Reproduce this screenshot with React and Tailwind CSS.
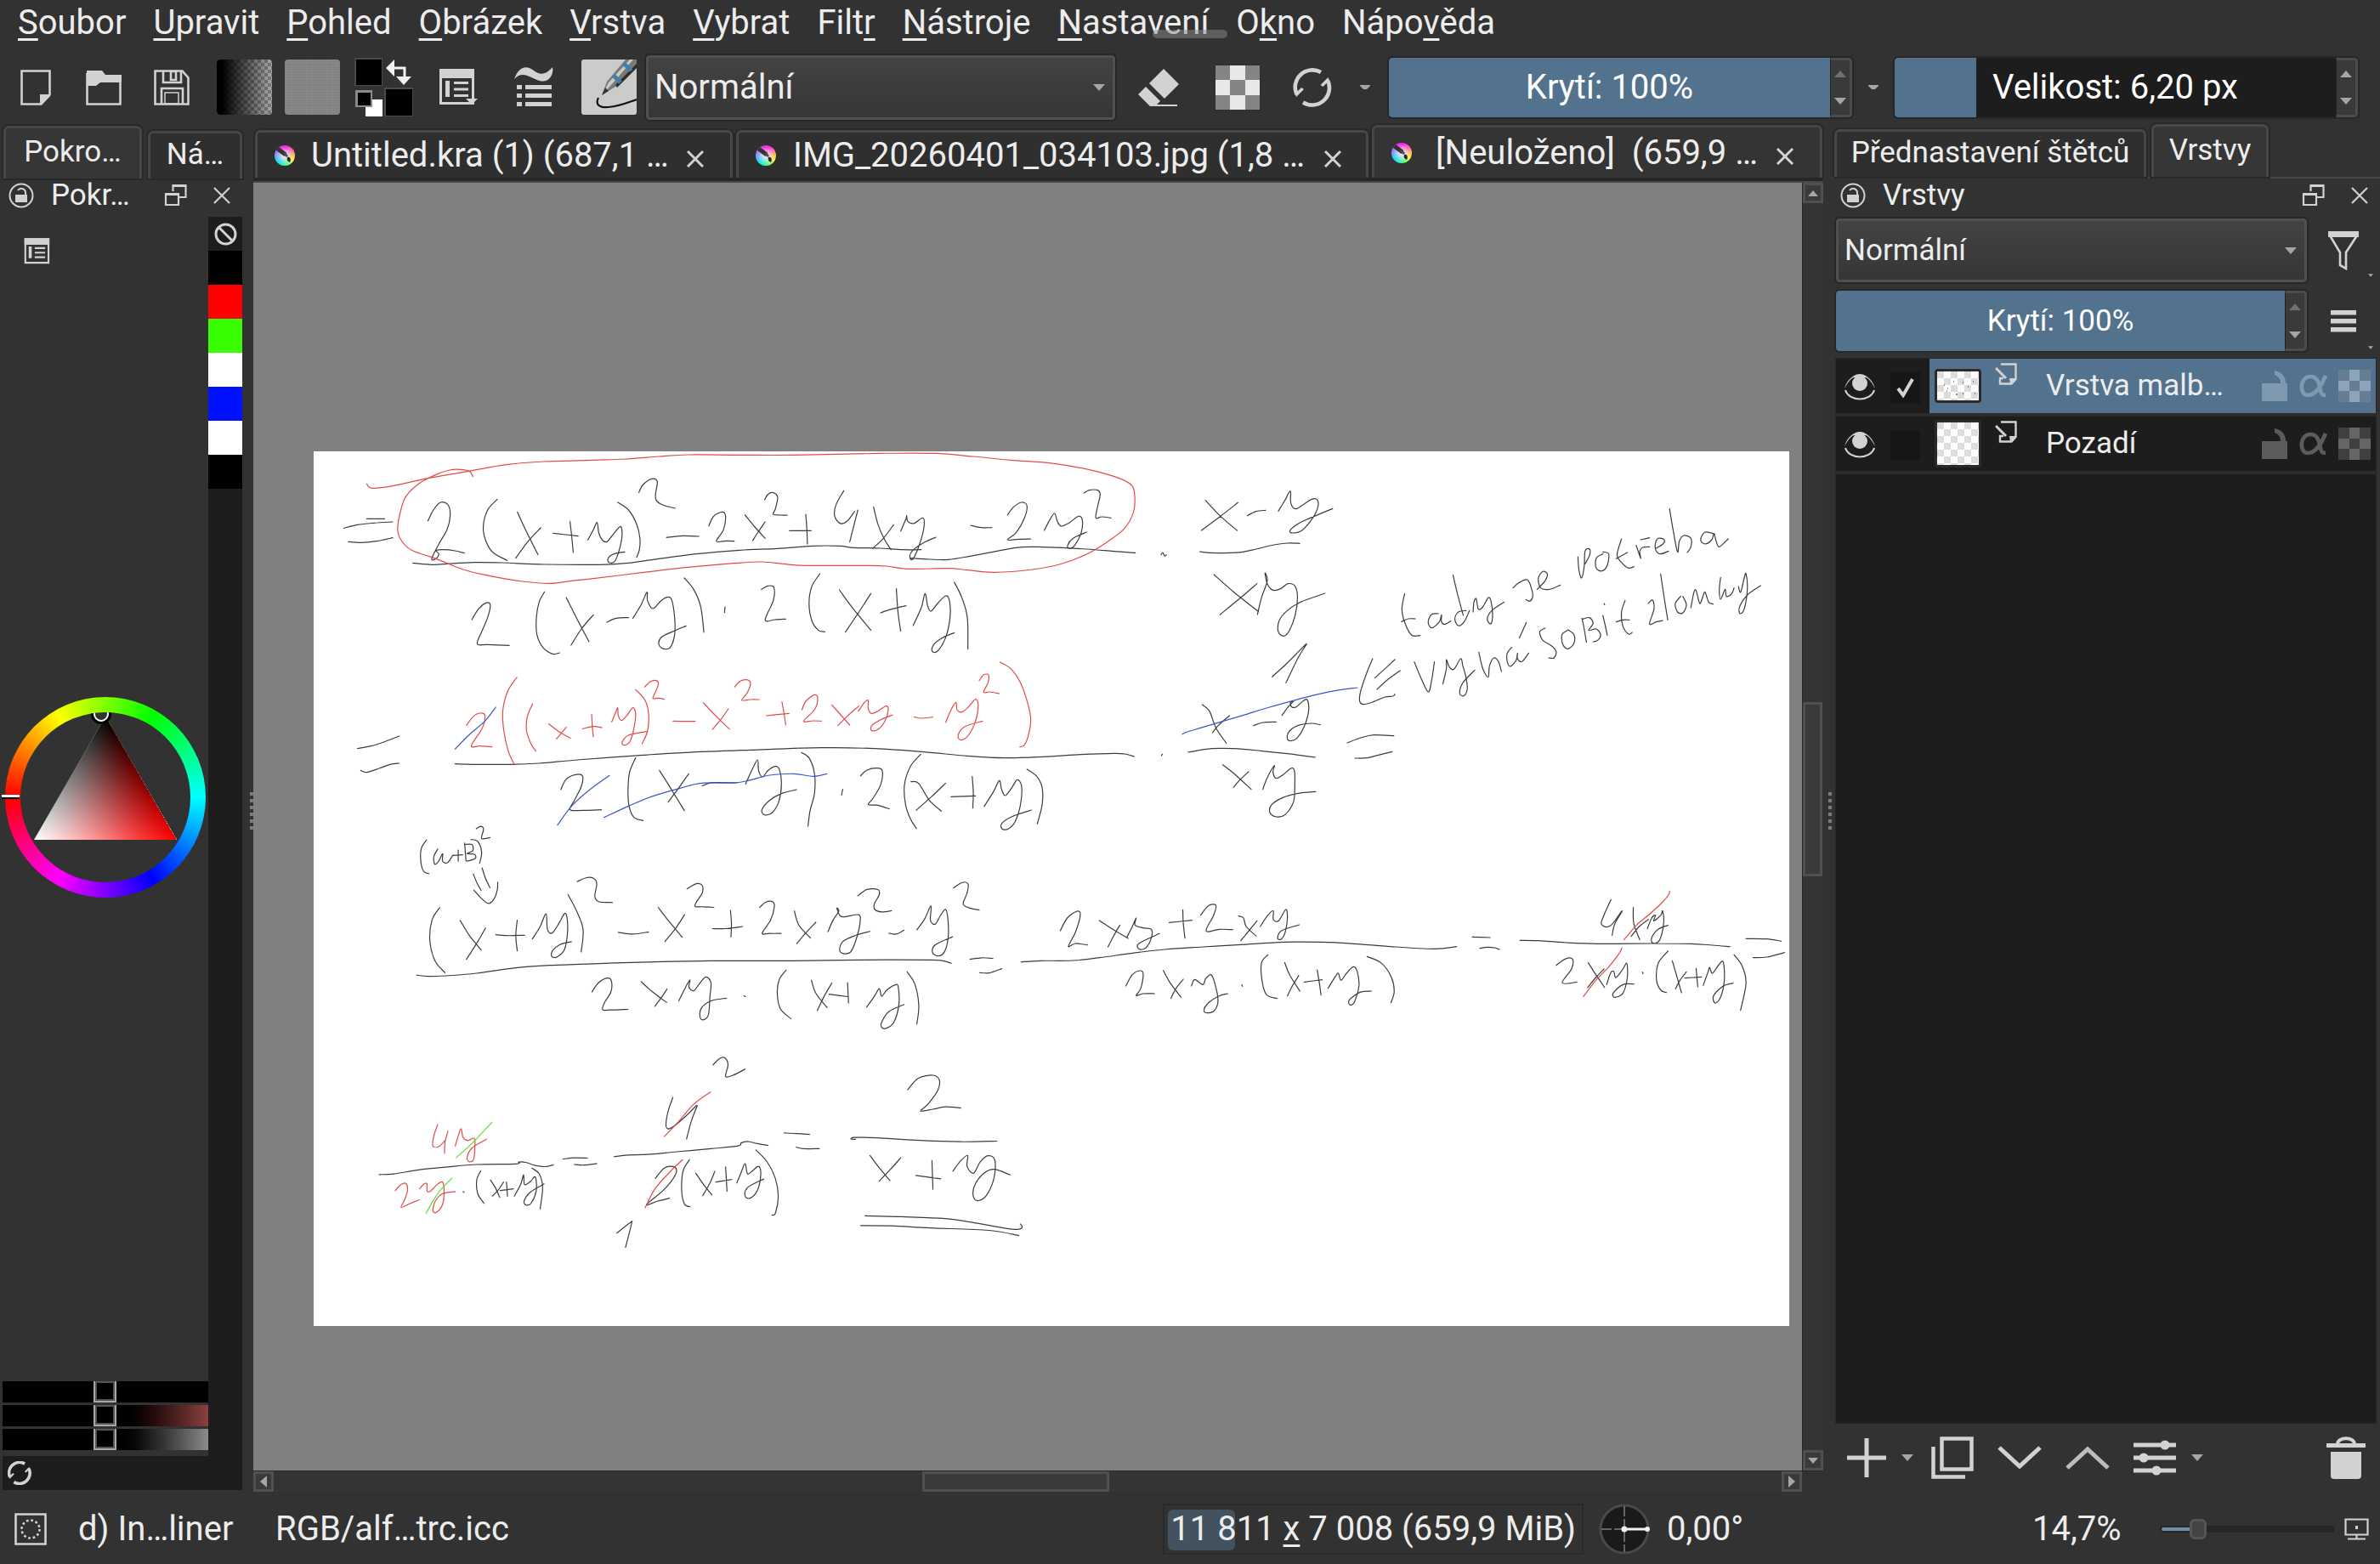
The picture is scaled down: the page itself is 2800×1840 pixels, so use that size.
import React from "react";

/* ---------- handwriting on the sheet ---------- */

const BLACK = "#3c3c3c";
const RED = "#e04a48";
const BLUE = "#3b55c9";
const GREEN = "#5fdc3c";

const SHEET = [
  {
    x: -9, y: -11, w: 1000 / 1568, h: 1 / 3,
    pens: [
      [BLACK, `112,271 145,271|70,304 95,292 125,286 160,282|78,352 100,355 130,350 160,338
|225,278 235,240 248,213 262,222 266,260 260,310 245,360 232,412 240,412 245,395 240,383 255,380 275,384 292,392
|353,202 335,240 327,300 332,350 345,390 371,418|390,247 405,310 428,398|433,303 410,350 387,410
|456,322 502,332|487,281 490,330 493,390
|520,346 530,310 537,284 540,320 546,345 555,352 565,330 580,298 583,330 578,380 570,420 560,426 557,412 568,395 588,388
|575,213 595,240 610,290 616,340 615,380 610,407|614,178 622,150 638,130 648,140 645,180 646,205 658,222 681,234
|665,337 695,331 725,333|743,296 752,262 768,247 774,262 770,310 757,350 775,349 790,350
|810,258 828,300 847,340|847,282 835,315 824,348|846,204 852,185 862,179 870,195 866,235 862,255 875,258 888,258
|892,313 932,313|922,255 924,310 925,360|992,172 978,220 975,260 985,287 998,280 1012,245|1018,240 1010,300 1003,353
|1047,229 1055,290 1066,340 1079,380|1084,292 1065,340 1045,376
|1097,315 1107,270 1108,260 1110,280 1122,287 1138,268 1140,300 1132,360 1120,412 1114,408 1118,385 1140,355 1162,336
|1226,294 1245,302 1265,302|1294,258 1305,230 1320,213 1330,225 1325,270 1310,320 1294,345 1315,343 1337,342
|1362,312 1372,275 1381,252 1386,280 1393,297 1408,285 1425,262 1432,275 1430,320 1418,365 1408,376 1405,365 1415,340 1440,318
|1435,180 1445,170 1460,170 1465,185 1460,230 1457,268 1468,264 1485,268
|197,427 235,433 260,430 310,425 360,426 440,432 540,433 590,428 640,415 720,395 800,382 870,376 935,367 985,367 1010,373 1060,375 1100,380 1135,380
|1115,410 1150,414 1185,415 1225,403 1275,385 1320,371 1360,371 1440,378 1490,386 1530,391
|306,627 318,590 332,568 340,575 335,620 324,670 316,713 335,715 375,718
|440,529 430,565 425,620 426,680 437,725 455,748 468,744|480,549 500,625 522,705|530,610 508,660 489,717|555,636 572,622 595,620
|603,622 618,575 629,530 630,560 640,588 655,560 668,547 675,560 680,620 680,680 672,725 660,730 651,715 655,690 675,670 701,649
|698,480 715,520 728,580 734,672|773,582 772,602|840,520 852,508 863,513 862,560 847,628 865,627 885,625
|948,465 933,510 928,570 933,630 945,664 957,670|984,522 1010,590 1042,664|1042,535 1020,600 995,671
|1060,603 1080,590 1107,578|1089,518 1092,600 1097,667
|1120,648 1135,585 1142,535 1147,580 1153,597 1165,570 1180,543 1187,560 1188,620 1180,690 1165,738 1155,738 1158,715 1175,690 1196,673
|1196,495 1210,550 1220,620 1221,731
|95,1082 130,1068 172,1038|101,1159 112,1166 135,1152 155,1138 172,1134
|275,1136 310,1138 380,1138 430,1134 500,1122 600,1108 700,1096 820,1087 950,1079 1050,1082 1140,1094 1220,1108 1290,1115 1360,1111 1430,1103 1490,1099 1510,1101 1528,1110
|470,1227 480,1190 497,1174 510,1178 508,1215 495,1265 487,1298 510,1300 545,1298
|608,1115 597,1165 594,1230 596,1285 605,1325 622,1336|652,1159 672,1220 698,1301|706,1171 688,1220 668,1271|731,1214 750,1202 795,1203
|811,1207 822,1160 833,1122 835,1160 842,1182 852,1160 865,1145 873,1155 877,1210 872,1270 860,1308 846,1316 841,1298 855,1265 878,1240 905,1227
|914,1096 928,1115 938,1170 938,1240 930,1300 926,1356|990,1226 988,1246
|1023,1178 1035,1158 1053,1151 1063,1160 1060,1210 1045,1260 1037,1280 1055,1282 1076,1295
|1134,1102 1115,1145 1104,1210 1106,1280 1115,1330 1126,1364|1116,1199 1130,1205 1150,1265 1172,1303|1180,1204 1155,1250 1126,1299
|1190,1252 1235,1249|1229,1180 1231,1240 1230,1292
|1251,1286 1268,1235 1279,1195 1283,1225 1290,1248 1302,1220 1312,1192 1320,1215 1318,1280 1308,1340 1295,1366 1284,1365 1284,1345 1305,1320 1338,1299
|1330,1155 1348,1180 1358,1220 1358,1280 1349,1348`],
      [RED, `112,148 122,163 160,155 225,128 300,103 370,80 440,69 530,64 590,60 650,51 705,45 800,46 900,46 1060,40 1160,40 1230,51 1300,64 1380,76 1450,100 1500,128 1524,155 1529,200 1526,250 1510,305 1480,350 1440,396 1390,432 1340,450 1270,460 1220,452 1185,446 1110,448 1070,438 1030,436 920,436 880,430 840,423 790,428 700,443 620,461 530,482 490,490 450,499 400,492 340,473 290,450 240,412 195,382 175,345 169,305 175,240 185,190 210,145 240,115 265,99 285,97 302,104 308,122
|296,1000 308,970 320,957 330,965 325,1010 305,1072 320,1073 343,1076|389,831 372,880 363,950 365,1020 373,1090 384,1137
|418,924 408,970 407,1020 415,1065 424,1091|448,995 465,1020 488,1046|480,1007 470,1030 462,1048
|510,1012 530,1004 546,1008|527,961 528,1000 530,1040
|564,988 572,950 575,938 576,965 582,983 592,965 603,938 608,960 605,1010 598,1055 588,1070 583,1060 595,1035 628,1022
|608,874 625,910 632,960 630,1020 620,1065|625,864 635,846 646,842 650,855 644,885 640,905 650,904 661,908
|677,985 700,986 718,986|733,920 755,965 781,1013|779,942 765,980 750,1014
|791,864 800,845 813,839 820,852 814,885 804,911 820,909 836,909|849,966 870,962 891,958|878,917 882,960 885,999
|915,945 922,915 938,892 944,905 938,945 918,985 935,984 951,985|970,928 985,960 1003,999|1020,932 1000,965 981,1001
|1019,950 1030,920 1037,912 1037,940 1043,958 1055,950 1070,932 1074,945 1068,985 1055,1015 1043,1018 1044,1000 1060,980 1082,963
|1122,970 1135,975 1156,971|1180,990 1190,945 1199,919 1201,945 1210,953 1222,935 1235,908 1240,930 1235,985 1222,1035 1208,1052 1203,1035 1215,1005 1248,985
|1242,842 1250,822 1259,822 1258,850 1250,883 1262,882 1279,888
|1280,777 1300,800 1318,850 1331,920 1337,980 1332,1040 1325,1070 1317,1076`],
      [BLUE, `275,1084 300,1035 330,985 350,936|464,1352 490,1285 525,1225 560,1177
|550,1325 595,1285 640,1250 690,1222 730,1204 790,1203 820,1193 855,1176 900,1171 935,1180 961,1171`],
    ],
  },
  {
    x: 931, y: -11, w: 820 / 1568, h: 1 / 3,
    pens: [
      [BLACK, `126,398 130,390 134,402 138,398|226,206 260,262 297,312|299,214 260,262 217,312|320,260 340,245 361,241
|390,244 405,205 417,173 418,215 428,236 445,222 465,202 478,205 478,235 462,280 440,315 418,320 420,305 445,280 512,235
|213,387 240,391 270,392 310,388 340,378 380,363 410,357 438,358|245,468 290,530 345,598|342,500 305,550 259,609
|343,609 352,550 365,490 360,462 365,500 378,523 395,518 412,500 428,510 433,550 428,610 415,665 402,685 390,670 392,630 410,595 440,565 495,534
|376,829 410,780 448,720 452,717 435,760 407,850|219,927 235,950 250,1010 273,1063|280,966 255,1000 242,1026|334,1001 355,990 385,988
|398,965 412,935 424,915 417,920 420,935 430,935 445,915 455,910 458,950 448,1005 432,1045 418,1055 410,1045 415,1020 435,1000 465,993 484,998
|187,1095 240,1082 290,1082 350,1090 410,1100 473,1113|127,1107 129,1102
|545,1062 575,1044 605,1034 650,1037|562,1116 590,1115 615,1105 646,1093
|265,1139 290,1170 329,1226|323,1164 305,1190 289,1219
|355,1226 365,1185 381,1142 378,1165 385,1187 400,1175 418,1152 426,1160 427,1210 424,1270 405,1315 385,1323 371,1308 375,1280 400,1255 435,1240 474,1234
|602,765 590,810 575,880 573,915 582,926 605,916 630,900 648,897 652,890|607,833 630,800 652,768|612,873 635,840 664,807
|674,536 668,590 675,640 690,682 709,683|667,634 682,624 698,624
|750,606 735,608 727,635 735,656 752,635 757,610 757,635 765,643 778,632
|812,595 795,600 787,625 795,648 808,635 820,595|783,470 792,530 802,590 806,612
|828,600 830,565 835,553 840,590 850,582 862,550 868,560 872,610 868,642 860,625 870,595 898,565
|918,515 930,498 950,486 960,520 962,548 955,562 947,556|972,520 990,490 995,465 985,457 975,480 980,515 1000,520 1024,505
|1064,405 1066,450 1072,480 1078,440 1080,385 1090,378 1090,400 1080,430|1120,395 1105,410 1105,445 1118,455 1130,435 1133,395 1120,388
|1162,342 1152,400 1165,430 1178,445 1190,440|1150,412 1175,390|1195,365 1205,410 1203,385 1210,372 1225,370|1205,345 1225,338
|1240,375 1255,360 1258,345 1245,340 1238,360 1240,385 1250,395 1268,385|1270,236 1278,310 1288,388 1292,350 1302,330 1318,340 1318,370 1310,390
|1372,325 1350,318 1340,345 1350,360 1365,345 1370,325 1375,350 1382,370 1402,342
|696,776 710,830 727,882 735,840 741,776
|760,854 768,800 768,768 775,795 785,802 800,765 805,790 812,830 815,870 808,895 798,888 805,850 832,805
|841,742 850,800 862,830 865,790 875,762 885,775 892,810|915,725 905,745 905,775 912,792 925,770 928,745 928,765 938,775 953,745
|948,637 932,692|990,657 978,670 985,700 1005,720 1015,740 1010,762 998,762
|1040,665 1028,680 1030,715 1042,730 1055,710 1055,680 1042,663|1073,622 1078,660 1083,706
|1075,625 1090,620 1098,640 1088,665 1105,660 1115,680 1108,700 1098,705|1120,612 1125,645 1130,682|1123,570 1124,575
|1170,560 1162,600 1165,650 1178,678 1186,672|1150,635 1165,628 1180,628|1222,570 1232,558 1235,590 1225,642 1240,635 1255,630
|1250,466 1258,550 1266,628|1295,545 1283,570 1288,600 1300,603 1308,575 1300,545
|1318,585 1325,530 1330,525 1338,570 1345,545 1350,530 1358,565 1368,572|1385,478 1382,520 1385,555 1395,520 1398,545 1410,535 1415,515
|1425,510 1430,530 1438,480 1442,465 1445,520 1438,590 1428,605 1428,580 1445,540 1475,507`],
      [BLUE, `174,1031 185,1023 215,1009 260,988 310,965 370,936 430,910 480,890 520,877 568,867`],
    ],
  },
  {
    x: -9, y: 409, w: 900 / 1568, h: 560 / 1568,
    pens: [
      [BLACK, `247,135 236,165 236,215 242,240 252,246|270,165 262,190 264,215 272,205 280,180 280,205 290,210 300,188
|300,186 321,184|312,168 312,205|325,145 328,204|325,150 340,150 342,170 330,180 345,182 347,196 330,205
|338,133 352,140 360,175 356,211|349,98 358,90 364,100 360,130 377,127
|343,247 350,275 359,301|361,227 368,262 377,292|344,300 358,325 374,344 385,330 392,300 393,274
|274,358 258,400 254,470 265,535 285,572|316,400 335,450 359,497|368,425 350,475 329,528
|389,447 410,450 448,449|433,399 430,450 433,500
|464,461 480,420 492,378 495,430 505,441 520,405 530,377 535,390 536,440 530,495 515,520 504,519 505,500 520,480 544,470
|537,315 555,370 568,430 564,504|556,272 575,259 590,262 596,280 592,320 600,338 628,341|640,439 670,445 702,438
|722,357 745,405 771,455|776,381 758,425 736,469|781,296 800,279 812,285 812,310 800,340 798,354 815,355 836,357
|833,427 860,427 895,420|870,367 872,410 871,454|930,357 942,340 956,338 960,355 952,400 935,442 950,443 974,443
|1001,369 1010,415 1034,458|1045,406 1025,440 1006,476
|1070,437 1080,400 1092,370 1088,360 1095,385 1105,388 1132,381 1136,400 1130,450 1118,500 1105,510 1094,500 1100,470 1125,450 1156,436
|1131,319 1150,298 1172,298 1175,315 1165,345 1166,364 1180,372 1200,368|1195,442 1210,445 1226,432
|1252,431 1268,395 1281,352 1280,400 1290,412 1300,385 1311,364 1316,400 1316,460 1308,505 1295,517 1284,505 1290,480 1325,454
|1327,293 1345,275 1357,280 1355,310 1347,345 1358,358 1380,366
|227,580 250,584 300,581 350,574 420,558 500,548 600,542 700,537 830,533 1000,533 1140,530 1280,530 1305,533 1323,541
|1361,528 1385,523 1408,525|1381,572 1400,573 1426,559
|586,635 600,605 618,590 626,600 625,635 612,670 608,694 625,695 660,693|687,602 710,635 739,670|740,626 728,655 715,683
|764,665 778,620 787,596 785,620 795,631 808,605 820,586 830,605 828,650 825,710 815,727 808,720 810,690 830,665 862,656
|898,648 901,651|984,564 970,595 966,640 972,690 994,724|1036,597 1045,640 1068,687|1078,606 1062,650 1048,697
|1072,643 1111,651|1110,605 1112,672
|1149,686 1165,650 1175,625 1180,650 1190,630 1208,612 1214,620 1215,680 1205,735 1190,755 1180,752 1180,735 1195,700 1226,677
|1232,569 1248,610 1256,680 1252,741
|150,1237 180,1235 230,1222 290,1212 350,1204 430,1202 436,1196 450,1197 470,1207 490,1211 507,1205
|322,1293 324,1296|358,1225 350,1255 352,1300 365,1332|378,1255 388,1280 397,1312|405,1262 393,1290 382,1308
|398,1290 425,1284|411,1262 413,1308
|427,1308 440,1270 446,1238 448,1270 460,1260 470,1245 472,1290 462,1330 452,1338 447,1325 460,1295 488,1268
|463,1216 478,1235 485,1280 480,1350|527,1186 550,1182 577,1183|550,1204 570,1206 596,1201
|752,983 742,1030 738,1078 748,1084 775,1050 800,1010|802,1010 790,1060 780,1120
|834,876 848,855 858,852 865,875 860,914 875,910 900,890
|632,1178 660,1173 700,1171 760,1162 830,1152 885,1143 892,1133 905,1128 925,1135 947,1141
|716,1250 735,1215 755,1212 758,1235 735,1285 698,1336 720,1325 745,1315
|786,1188 773,1225 770,1290 776,1335 787,1343|799,1233 815,1270 832,1304|838,1226 828,1265 813,1307
|840,1262 873,1253|860,1212 863,1292|883,1265 892,1230 900,1201 905,1235 915,1225 928,1210 932,1240 925,1290 910,1315 900,1308 905,1280 938,1252
|922,1156 945,1195 962,1250 968,1310 962,1365 955,1370|637,1430 665,1395 667,1400 655,1477
|980,1100 1005,1102 1032,1105|1005,1147 1020,1152 1052,1152
|1233,958 1255,920 1285,910 1298,925 1295,960 1275,1005 1260,1028 1285,1022 1310,1014 1342,1018
|1126,1121 1117,1120 1125,1115 1170,1116 1250,1124 1340,1129 1416,1127|1156,1174 1175,1215 1197,1257|1219,1182 1198,1220 1175,1259
|1250,1240 1301,1251|1283,1191 1285,1285
|1326,1226 1340,1195 1356,1174 1355,1210 1368,1233 1382,1195 1398,1175 1412,1190 1410,1250 1395,1305 1378,1323 1368,1310 1370,1275 1388,1235 1410,1220 1443,1238
|1146,1373 1220,1376 1310,1382 1370,1396 1440,1416 1462,1417 1468,1410 1464,1400|1137,1405 1200,1406 1280,1413 1400,1421 1461,1438`],
      [RED, `270,1072 262,1110 260,1143 272,1145 285,1125|291,1094 285,1130 284,1167
|306,1143 312,1110 318,1086 322,1115 332,1125 345,1118 346,1150 344,1185 336,1195 330,1183 340,1150 370,1121
|183,1290 195,1270 205,1267 208,1290 202,1320 195,1345 210,1335 232,1320
|233,1284 242,1268 248,1268 248,1290 255,1292 270,1268 280,1262 283,1290 280,1335 268,1361 260,1357 265,1325 280,1300 306,1293
|735,1111 765,1060 795,1005 829,965|695,1347 715,1285 745,1230 772,1188`],
      [GREEN, `308,1181 340,1135 381,1065|246,1365 270,1300 299,1249`],
    ],
  },
  {
    x: 791, y: 449, w: 1000 / 1568, h: 1 / 3,
    pens: [
      [BLACK, `137,345 150,300 168,276 174,290 165,350 152,400 165,390 187,395|209,309 230,335 262,372|247,325 235,365 225,402
|260,367 270,330 277,300 275,325 290,335 305,340 305,370 295,405 283,410 282,390 320,355|338,316 380,308|363,271 364,320 367,371
|396,290 410,257 424,255 420,290 406,346 430,340 455,341|466,293 475,300 480,330 498,363|500,310 485,345 470,380
|506,330 520,290 530,275 530,305 540,310 553,270 556,300 552,350 545,374 538,372 545,345 578,324
|65,455 100,451 160,450 210,440 270,424 330,411 400,402 470,394 550,385 620,385 680,391 740,400 825,409 868,401
|258,540 270,500 285,486 290,500 285,550 277,574 290,567 311,567|327,485 340,530 360,580|364,516 350,550 341,584
|379,540 385,517 400,535 405,515 415,500 422,530 428,590 422,625 410,635 402,628 410,600 430,575 446,567|472,535 473,541
|520,430 508,460 510,530 518,572 537,584|551,457 560,500 579,558|577,503 565,540 556,575|587,526 620,518|611,483 615,530 618,572
|631,548 645,505 650,495 655,520 665,495 678,472 685,490 688,540 680,595 672,607 670,590 690,562 711,558
|703,436 730,460 748,510 753,560 747,599|897,367 930,369|911,407 925,403 938,405 947,411
|1153,235 1140,290 1135,320 1145,332 1155,322 1172,277|1174,275 1160,320 1155,361|1194,263 1195,320 1206,377|1222,305 1205,330 1190,365
|1220,338 1228,300 1235,290 1232,310 1245,290 1248,275 1250,320 1242,380 1230,388 1228,370 1240,340 1258,326
|985,379 1020,380 1070,387 1130,391 1230,390 1300,391 1340,396 1372,401|1052,467 1068,445 1082,445 1080,480 1063,529 1090,526
|1111,458 1125,500 1141,545|1140,480 1125,510 1110,545
|1145,535 1152,495 1158,488 1162,510 1175,480 1182,460 1183,510 1175,565 1160,580 1157,565 1175,535 1195,533|1211,491 1212,497
|1258,417 1240,460 1237,520 1245,555 1255,563|1266,451 1275,510 1283,564|1292,490 1280,520 1272,550|1289,512 1320,508|1310,478 1313,543
|1323,538 1332,490 1335,475 1340,495 1352,465 1360,455 1362,520 1355,580 1345,600 1342,575 1360,540 1378,530
|1380,430 1395,470 1402,530 1392,626|1402,373 1440,374 1467,382|1415,440 1440,438 1473,422`],
      [RED, `1177,377 1200,325 1225,285 1250,240 1260,215 1261,205|1102,577 1125,520 1150,470 1168,425 1173,406`],
    ],
  },
];

/* Turns pen samples into one smooth path per set of strokes. */
function toPath(strokes) {
  return strokes
    .split("|")
    .map((s) => {
      const p = s.trim().split(/\s+/).map((c) => c.split(",").map(Number));
      let d = `M${p[0][0]} ${p[0][1]}`;
      for (let i = 0; i < p.length - 1; i++) {
        const a = p[i - 1] || p[i];
        const b = p[i];
        const c = p[i + 1];
        const e = p[i + 2] || c;
        d += `C${b[0] + (c[0] - a[0]) / 6} ${b[1] + (c[1] - a[1]) / 6} ${c[0] - (e[0] - b[0]) / 6} ${c[1] - (e[1] - b[1]) / 6} ${c[0]} ${c[1]}`;
      }
      return d;
    })
    .join("");
}

function Sheet() {
  return (
    <svg viewBox="0 0 1736 1029" className="block w-full bg-white" role="img" aria-label="Ručně psaný výpočet">
      {SHEET.map((g, i) => (
        <g key={i} transform={`translate(${g.x} ${g.y}) scale(${g.w} ${g.h})`}>
          {g.pens.map(([color, strokes]) => (
            <path key={color} d={toPath(strokes)} fill="none" stroke={color} strokeWidth="1.2" strokeLinecap="round" strokeLinejoin="round" vectorEffect="non-scaling-stroke" />
          ))}
        </g>
      ))}
    </svg>
  );
}

/* ---------- icons ---------- */

const I = ({ w, h, children, className = "" }) => (
  <svg width={w} height={h} viewBox={`0 0 ${w} ${h}`} fill="none" className={`block shrink-0 ${className}`} aria-hidden="true">
    {children}
  </svg>
);
const C = "#d2d2d2";

const NewIcon = () => (
  <I w={36} h={42}><path d="M1.5 1.5h33v28l-10 11h-23z" stroke={C} strokeWidth="2.6" /><path d="M23 29h12v2L25 41h-2z" fill={C} /></I>
);
const OpenIcon = () => (
  <I w={42} h={42}><path d="M1.5 4v36.500h39V6" stroke={C} strokeWidth="2.600" /><path d="M1 1h18l4 5h19v9H17l-5 4H1z" fill={C} /></I>
);
const SaveIcon = () => (
  <I w={42} h={42}>
    <path d="M1.500 1.500h32l7 8v31h-39z" stroke={C} strokeWidth="2.600" />
    <path d="M11 2v13h21V2M9 41V22h25v19" stroke={C} strokeWidth="2.600" /><path d="M20 2h6v10h-6z" stroke={C} strokeWidth="2.600" /><path d="M13 27h16v13H13z" stroke={C} strokeWidth="1.500" />
  </I>
);
const EditorIcon = ({ arrow = true, w = 46, h = 43 }) => (
  <svg width={w} height={h} viewBox="0 0 46 43" fill="none" className="block" aria-hidden="true">
    <path d="M1 0h41v11H1z" fill={C} /><path d="M2.500 2h38v38.500h-38z" stroke={C} strokeWidth="3" />
    <path d="M8 14h5v19H8zM18 15h17v3H18zM18 22.500h17v3H18zM18 30h17v3H18z" fill={C} />
    {arrow && <path d="M32 35h14l-7 7z" fill={C} />}
  </svg>
);
const BrushListIcon = () => (
  <I w={48} h={47}>
    <path d="M1 14C7-2 16-2 24 4c9 7 16 3 22-4 2 9-5 19-15 16C20 13 11 3 1 14z" fill={C} />
    <path d="M4 21h6v5H4zM14 21h31v5H14zM4 31h6v5H4zM14 31h31v5H14zM4 41h6v5H4zM14 41h31v5H14z" fill={C} />
  </I>
);
const EraserIcon = () => (
  <I w={48} h={44}><path d="M30 0l18 18-17 17L13 17zM9 21l17 17-4 4h24v2H14L0 30z" fill={C} /></I>
);
const CheckerIcon = ({ w = 52, a = "#e8e8e8", b = "#848484" }) => (
  <svg width={w} height={w} viewBox="0 0 3 3" className="block shrink-0" shapeRendering="crispEdges" aria-hidden="true">
    <path d="M0 0h3v3H0z" fill={b} /><path d="M1 0h1v1H1zM0 1h1v1H0zM2 1h1v1H2zM1 2h1v1H1z" fill={a} />
  </svg>
);
const ReloadIcon = ({ w = 46, s = 4.6 }) => (
  <svg width={w} height={w} viewBox="0 0 46 46" fill="none" className="block" aria-hidden="true">
    <path d="M33 5A20.300 20.300 0 0 0 4.500 31" stroke={C} strokeWidth={s} />
    <path d="M12 40.500A20.300 20.300 0 0 0 41 14.500" stroke={C} strokeWidth={s} />
    <path d="M1 25l3 9 9-9-3-2-4 4zM44.500 21l-3-10-9 9 3 2 4-4z" fill={C} />
  </svg>
);
const Down = ({ w = 14, color = "#a6a6a6" }) => (
  <svg width={w} height={w / 2 + 1} viewBox="0 0 14 8" className="block shrink-0" aria-hidden="true"><path d="M0 0h14L7 8z" fill={color} /></svg>
);
const SmallDown = () => (
  <I w={12} h={5}><path d="M0 0h12v1L8 5H4L0 1z" fill="#a6a6a6" /></I>
);
const Up = ({ w = 14, color = "#a6a6a6" }) => (
  <svg width={w} height={w / 2 + 1} viewBox="0 0 14 8" className="block shrink-0" aria-hidden="true"><path d="M0 8h14L7 0z" fill={color} /></svg>
);
const LockRoundIcon = () => (
  <I w={30} h={30}><circle cx="15" cy="15" r="13.500" stroke={C} strokeWidth="2" /><path d="M8 14h14v9H8z" fill={C} /><path d="M20 14v-3a5 5 0 0 0-9-2" stroke={C} strokeWidth="2" /></I>
);
const FloatIcon = () => (
  <I w={27} h={27}><path d="M10.500 9V2h15v14H18M10 3h16M2 12h15v13H2zM2 13h15" stroke={C} strokeWidth="2.200" /></I>
);
const XIcon = ({ w = 20, s = 2.2 }) => (
  <svg width={w} height={w} viewBox="0 0 20 20" className="block" aria-hidden="true"><path d="M1 1l18 18M19 1L1 19" stroke={C} strokeWidth={s} /></svg>
);
const Logo = () => (
  <div className="size-6 shrink-0 overflow-hidden rounded-full bg-[radial-gradient(circle,#e6e0f0_15%,#e6e0f000_60%),conic-gradient(#ff1fe8,#ff5fc0_50deg,#ffb45c_85deg,#fff04a_120deg,#6cff7a_160deg,#19f0e0_205deg,#35c8ff_245deg,#8f8bff_285deg,#d84bff_320deg,#ff1fe8)]">
    <svg viewBox="0 0 24 24" className="size-6" aria-hidden="true">
      <path d="M1 2l12 9" stroke="#333" strokeWidth="5" /><path d="M11 9l4 4" stroke="#4a4a4a" strokeWidth="3" />
      <path d="M15 14c3-1 5 2 3 6-2-1-4-2-3-6z" fill="#1f2a30" />
    </svg>
  </div>
);
const PresetIcon = () => (
  <I w={65} h={65}>
    <rect width="65" height="65" rx="3" fill="#cbcbcb" />
    <path d="M20 45c-4 8 1 12 12 11 14-1 24-6 33-9" stroke="#111" strokeWidth="2.200" />
    <path d="M24 42l6-16L52 0h13v6L40 32z" fill="#777a76" /><path d="M24 42l8-15L57 0h4L36 29z" fill="#c9cbc3" />
    <path d="M40 30L65 5v5L42 33z" fill="#2c2c2c" /><path d="M38 19l8 8M50 5l9 8" stroke="#3f7fae" strokeWidth="5" />
    <path d="M24 42l4-9 4 4z" fill="#333" />
  </I>
);
const EyeIcon = () => (
  <I w={36} h={32}>
    <path d="M0 17C4 4 13 0 18 0s14 4 18 17C31 8 28 5 25 4H11C8 5 5 8 0 17z" fill={C} /><circle cx="18" cy="11" r="9" fill={C} />
    <path d="M1 19c5 14 29 14 34 0" stroke={C} strokeWidth="2.200" />
  </I>
);
const LayerTypeIcon = () => (
  <I w={26} h={26}><path d="M7 1.500h17.500V19l-5 5.500H6V18h4" stroke={C} strokeWidth="2.400" /><path d="M1 6l12 12" stroke={C} strokeWidth="3" /><path d="M17 18h8l-7 7z" fill={C} /></I>
);
const LockIcon = ({ color }) => (
  <I w={32} h={36}><path d="M1 15h30v21H1z" fill={color} /><path d="M16 0c9 2 13 7 13 15h-6C23 10 21 7 16 5z" fill={color} /></I>
);
const AlphaIcon = ({ color }) => (
  <I w={33} h={28}><path d="M31 2C25 16 19 25 10 25 0 25 0 3 13 3c9 0 10 8 12 16 1 5 2 6 6 6" stroke={color} strokeWidth="4.600" /></I>
);

const frame = "rounded border-[3px] border-[#505050] outline-2 outline-[#272727] bg-linear-to-b from-[#434343] to-[#363636]";

/* ---------- controls ---------- */

function BlendSelect({ label, className, arrow }) {
  return (
    <div className={`relative ${className}`}>
      <select aria-label={label} className={`h-full w-full appearance-none pl-[7px] text-[#ececec] ${frame}`}>
        <option>Normální</option>
      </select>
      <div className={`pointer-events-none absolute top-1/2 -translate-y-1/2 ${arrow}`}><Down /></div>
    </div>
  );
}

function SpinSlider({ value, label, fill, dimUp, className }) {
  return (
    <div className={`flex min-w-0 overflow-hidden rounded outline-2 outline-[#272727] ${className}`}>
      <input aria-label={label} defaultValue={value} className={`min-w-0 flex-1 text-center text-white ${fill}`} />
      <div className="flex w-[26px] shrink-0 flex-col rounded-r border-[3px] border-l border-[#4c4c4c] border-l-[#222] bg-[#3a3a3a]">
        <button aria-label={`${label} +`} className="grid flex-1 place-items-center"><Up color={dimUp ? "#6f6f6f" : "#a6a6a6"} /></button>
        <button aria-label={`${label} −`} className="grid flex-1 place-items-center"><Down /></button>
      </div>
    </div>
  );
}

const MENU = [["", "S", "oubor"], ["", "U", "pravit"], ["", "P", "ohled"], ["", "O", "brázek"], ["", "V", "rstva"], ["", "V", "ybrat"], ["Filt", "r", ""], ["", "N", "ástroje"], ["", "N", "astavení"], ["O", "k", "no"], ["Nápo", "v", "ěda"]];

function MenuBar() {
  return (
    <nav className="relative flex h-[58px] shrink-0 items-start gap-8 pt-1 pl-[21px]">
      {MENU.map(([a, b, c]) => (
        <button key={a + b + c} className="leading-[46px] whitespace-nowrap">
          {a}<span className="underline decoration-[3px] underline-offset-[5px] [text-decoration-skip-ink:none]">{b}</span>{c}
        </button>
      ))}
      <div className="absolute top-[35px] left-1/2 h-2.5 w-[88px] -translate-x-1/2 rounded-full bg-[#8a8a8a]/50" />
    </nav>
  );
}

const Tool = ({ label, className, children }) => (
  <button aria-label={label} className={`grid h-full shrink-0 place-items-center ${className}`}>{children}</button>
);

function Toolbar() {
  return (
    <div className="flex h-[86px] shrink-0 items-center pt-[3px] pl-0.5">
      <Tool label="Nový" className="w-20"><NewIcon /></Tool>
      <Tool label="Otevřít" className="w-20"><OpenIcon /></Tool>
      <Tool label="Uložit" className="w-20"><SaveIcon /></Tool>
      <Tool label="Přechod" className="w-[90px]">
        <div className="relative size-[65px] overflow-hidden rounded-sm bg-[conic-gradient(#a8a8a8_25%,#7a7a7a_0_50%,#a8a8a8_0_75%,#7a7a7a_0)] bg-size-[8px_8px]">
          <div className="absolute inset-0 bg-linear-to-r from-black from-10% to-black/0" />
        </div>
      </Tool>
      <Tool label="Vzorek" className="w-[70px]">
        <div className="size-[65px] rounded-sm bg-[#858585] bg-[repeating-linear-gradient(0deg,#ffffff0c_0_1px,#0000_1px_3px),repeating-linear-gradient(90deg,#0000000c_0_1px,#0000_1px_3px)]" />
      </Tool>
      <Tool label="Barvy" className="w-[100px]">
        <I w={70} h={70}>
          <path d="M0 0h33v33H0z" fill="#4a4a4a" /><path d="M2 2h30v30H2z" fill="#000" />
          <path d="M35 35h34v34H35z" fill="#4a4a4a" /><path d="M37 37h31v31H37z" fill="#000" />
          <path d="M13 49h20v20H13z" fill="#fff" /><path d="M1 38h20v20H1z" fill="#8a8a8a" /><path d="M4 41h15v15H4z" fill="#000" />
          <path d="M42 12h17v14" stroke="#f2f2f2" strokeWidth="3" /><path d="M37 12l10-10v20zM49 22h18l-9 10z" fill="#f2f2f2" />
        </I>
      </Tool>
      <Tool label="Upravit předvolbu" className="w-[74px]"><EditorIcon /></Tool>
      <Tool label="Předvolby štětců" className="w-[104px]"><BrushListIcon /></Tool>
      <Tool label="Štětec" className="w-[72px]"><PresetIcon /></Tool>
      <BlendSelect label="Režim prolínání" className="ml-2 h-[76px] w-[552px] shrink-0" arrow="right-3" />
      <Tool label="Guma" className="w-[102px]"><EraserIcon /></Tool>
      <Tool label="Zachovat alfa" className="w-[84px]"><CheckerIcon /></Tool>
      <Tool label="Obnovit" className="w-[92px]"><ReloadIcon /></Tool>
      <Tool label="Možnosti krytí" className="w-8"><SmallDown /></Tool>
      <SpinSlider label="Krytí" value="Krytí: 100%" fill="bg-[#53728e]" dimUp className="ml-3 h-[70px] flex-1" />
      <Tool label="Možnosti velikosti" className="w-[50px]"><SmallDown /></Tool>
      <SpinSlider label="Velikost" value="Velikost: 6,20 px" fill="bg-[linear-gradient(to_right,#53728e_18.500%,#1d1d1d_18.500%)]" className="mr-[26px] h-[70px] flex-1" />
    </div>
  );
}

const tabBase = "rounded-t-md border-[3px] border-b-0 border-[#474747] outline-2 outline-[#292929] whitespace-nowrap";

function DockTab({ active, className, children }) {
  return (
    <button role="tab" aria-selected={!!active} className={`${tabBase} px-2 pb-1 text-[35px] ${active ? "h-[62px] bg-[#363636]" : "h-14 bg-[#2f2f2f]"} ${className}`}>{children}</button>
  );
}

function DockTitle({ children }) {
  return (
    <div className="flex h-[45px] shrink-0 items-center px-2.5 pb-1.5 text-[35px] leading-9">
      <button aria-label="Zamknout panel"><LockRoundIcon /></button>
      <h2 className="ml-5 flex-1">{children}</h2>
      <button aria-label="Odpojit panel"><FloatIcon /></button>
      <button aria-label="Zavřít panel" className="mr-1 ml-[31px]"><XIcon /></button>
    </div>
  );
}

const SWATCHES = ["bg-black", "bg-[#ff0000]", "bg-[#37ff00]", "bg-white", "bg-[#0011ff]", "bg-white", "bg-black"];
const BARS = ["bg-black", "bg-linear-to-r from-black from-55% to-[#8c4040]", "bg-linear-to-r from-black from-55% to-[#8c8c8c]"];

function ColorDock() {
  return (
    <aside className="flex w-[285px] shrink-0 flex-col">
      <div role="tablist" className="flex h-[66px] shrink-0 items-end gap-[7px] pl-1">
        <DockTab active className="w-[163px]">Pokro…</DockTab>
        <DockTab className="w-[111px]">Ná…</DockTab>
      </div>
      <DockTitle>Pokr…</DockTitle>
      <div className="flex min-h-0 flex-1">
        <div className="flex flex-1 flex-col">
          <div className="h-[94px] pt-5 pl-7"><button aria-label="Nastavení výběru barev"><EditorIcon arrow={false} w={33} h={31} /></button></div>
          <div className="flex flex-1 items-center justify-center pb-[98px] pl-[3px]">
            <div className="relative size-[236px] rounded-full bg-[conic-gradient(from_270deg,red,yellow,lime,cyan,blue,magenta,red)]">
              <div className="absolute inset-[18px] overflow-hidden rounded-full bg-[#323232]">
                <div className="absolute top-[5px] left-4 h-[145px] w-[168px] bg-[linear-gradient(to_bottom,black,transparent),conic-gradient(from_150deg_at_50%_0%,red,white_60deg,white)] [clip-path:polygon(50%_0,100%_100%,0_100%)]" />
                <div className="absolute -top-2.5 left-[83px] size-6 rounded-full border-[3px] border-black"><div className="size-full rounded-full border-2 border-white" /></div>
              </div>
              <div className="absolute top-[115px] -left-1 h-[5px] w-[21px] border-b-2 border-black bg-white" />
            </div>
          </div>
          <div className="flex h-[88px] flex-col gap-[3px] pl-[3px]">
            {BARS.map((b, i) => (
              <div key={i} className={`flex h-[25px] justify-center pr-0.5 ${b}`}>
                <div className="w-[27px] border-2 border-t-0 border-[#a8a8a8]"><div className="size-full border-2 border-[#555] bg-black" /></div>
              </div>
            ))}
          </div>
        </div>
        <div className="w-10 bg-[#1d1d1d]">
          <button aria-label="Vymazat" className="grid size-10 place-items-center">
            <I w={27} h={27}><circle cx="13.500" cy="13.500" r="11.500" stroke={C} strokeWidth="3" /><path d="M6 6l15 15" stroke={C} strokeWidth="3" /></I>
          </button>
          {SWATCHES.map((s, i) => <button key={i} aria-label={`Barva ${i + 1}`} className={`block size-10 ${s}`} />)}
        </div>
      </div>
      <div className="mb-0.5 ml-[3px] flex h-10 shrink-0 items-center bg-[#1d1d1d] pl-1.5"><button aria-label="Obnovit historii"><ReloadIcon w={28} s={6} /></button></div>
    </aside>
  );
}

function Splitter({ className }) {
  return (
    <div className={`flex shrink-0 flex-col justify-center gap-1 ${className}`}>
      {[0, 1, 2, 3, 4, 5].map((i) => <div key={i} className="size-1 bg-[#7c7c7c]" />)}
    </div>
  );
}

const DOCS = [
  { t: "Untitled.kra (1) (687,1 …", c: "w-[562px] ml-0.5 pl-[20px] pr-[31px]", g: "ml-[19px]" },
  { t: "IMG_20260401_034103.jpg (1,8 …", c: "w-[744px] pl-[20px] pr-[29px]", g: "ml-5" },
  { t: "[Neuloženo]\u00a0 (659,9 …", c: "min-w-0 flex-1 pl-[20px] pr-[31px]", g: "ml-7", active: true },
];

const scrollBtn = "grid size-6 shrink-0 place-items-center border-[3px] border-[#505050] bg-[#3a3a3a]";

function Editor() {
  return (
    <main className="flex min-w-0 flex-1 flex-col">
      <div role="tablist" className="flex h-[65px] shrink-0 items-end gap-1">
        {DOCS.map((d) => (
          <div key={d.t} className={`flex items-center ${tabBase} ${d.c} ${d.active ? "h-[62px] bg-[#343434]" : "h-14 bg-[#2f2f2f]"}`}>
            <Logo />
            <button role="tab" aria-selected={!!d.active} className={`flex-1 text-left whitespace-pre ${d.g}`}>{d.t}</button>
            <button aria-label="Zavřít" className="pt-2"><XIcon s={3} /></button>
          </div>
        ))}
      </div>
      <div className="h-1.5 shrink-0 border-y-2 border-t-[#272727] border-b-[#484848] bg-[#272727]" />
      <div className="flex min-h-0 flex-1">
        <div className="flex-1 bg-[#808080] pt-[316px] pr-[15px] pl-[71px]"><Sheet /></div>
        <div className="flex w-6 flex-col border-l border-[#272727] bg-[#343434]">
          <button aria-label="Nahoru" className={scrollBtn}><Up w={12} /></button>
          <div className="grid flex-1 grid-rows-[40%_14%_1fr]"><div /><div className="border-[3px] border-[#505050] bg-[#3a3a3a]" /></div>
          <button aria-label="Dolů" className={scrollBtn}><Down w={12} /></button>
        </div>
      </div>
      <div className="flex h-[25px] shrink-0 border-t border-[#272727] pr-6">
        <button aria-label="Vlevo" className={scrollBtn}><svg width="8" height="14" viewBox="0 0 8 14" aria-hidden="true"><path d="M8 0v14L0 7z" fill="#a6a6a6" /></svg></button>
        <div className="grid flex-1 grid-cols-[43%_220px_1fr] bg-[#343434]"><div /><div className="border-[3px] border-[#505050] bg-[#3a3a3a]" /></div>
        <button aria-label="Vpravo" className={scrollBtn}><svg width="8" height="14" viewBox="0 0 8 14" aria-hidden="true"><path d="M0 0v14l8-7z" fill="#a6a6a6" /></svg></button>
      </div>
    </main>
  );
}

const checker = "bg-[conic-gradient(#fff_25%,#dcdcdc_0_50%,#fff_0_75%,#dcdcdc_0)] bg-size-[16px_16px]";

function Layer({ name, selected }) {
  const dim = selected ? "#7f99b0" : "#5c5c5c";
  return (
    <li className="flex h-[68px] border-b-4 border-[#2c2c2c]">
      <div className="flex w-[110px] items-center gap-[18px] pt-1 pl-2.5">
        <button aria-label={`Viditelnost: ${name}`}><EyeIcon /></button>
        <label className="relative grid h-9 w-[35px] place-items-center bg-[#161616]">
          <input type="checkbox" defaultChecked={selected} aria-label={`Vybrat: ${name}`} className="absolute inset-0 appearance-none" />
          {selected && <I w={22} h={24}><path d="M2 13l6 8L19 2" stroke={C} strokeWidth="4" /></I>}
        </label>
      </div>
      <div className={`flex min-w-0 flex-1 items-center pl-1.5 ${selected ? "bg-[#53728e]" : ""}`}>
        <div className="w-[55px] rounded-sm border-[3px] border-[#2b2b2b]">
          {selected ? (
            <div className={`h-[34px] ${checker}`}>
              <I w={49} h={34}><path d="M8 16h1M12 20h1M19 12h1M30 13h1M36 18h1M42 12h1M11 23h1M22 27h2M30 26h1M44 26h1" stroke="#222" strokeWidth="1.200" /></I>
            </div>
          ) : <div className={`h-[50px] ${checker}`} />}
        </div>
        <div className="mb-7 ml-4"><LayerTypeIcon /></div>
        <span className="ml-[34px] flex-1 text-[35px]">{name}</span>
        <div className="flex items-center gap-[13px] pr-1.5">
          <button aria-label="Zámek"><LockIcon color={dim} /></button>
          <button aria-label="Dědit alfu"><AlphaIcon color={dim} /></button>
          <button aria-label="Zámek alfy"><CheckerIcon w={38} a={selected ? "#8ba4bb" : "#666"} b={selected ? "#677d92" : "#404040"} /></button>
        </div>
      </div>
    </li>
  );
}

function LayersDock() {
  return (
    <aside className="flex w-[645px] shrink-0 flex-col">
      <div role="tablist" className="flex h-[66px] shrink-0 items-end gap-1.5 border-b-2 border-[#474747] pl-[3px]">
        <DockTab className="w-[367px]">Přednastavení štětců</DockTab>
        <DockTab active className="w-[138px]">Vrstvy</DockTab>
      </div>
      <DockTitle>Vrstvy</DockTitle>
      <div className="grid grid-cols-[1fr_86px] gap-y-2 pl-[5px] text-[35px]">
        <BlendSelect label="Režim prolínání vrstvy" className="my-0.5 h-[75px]" arrow="right-3" />
        <button aria-label="Filtr vrstev" className="relative grid place-items-center">
          <I w={36} h={46}><path d="M2 5l12 20v15l7 4V25L34 5" stroke={C} strokeWidth="2.600" /><path d="M0 0h36v7H0z" fill={C} /></I>
          <div className="absolute right-2 bottom-2"><Down w={6} /></div>
        </button>
        <SpinSlider label="Krytí vrstvy" value="Krytí: 100%" fill="bg-[#53728e]" dimUp className="h-[71px]" />
        <button aria-label="Nabídka vrstev" className="relative grid place-items-center">
          <I w={30} h={26}><path d="M0 0h30v5.500H0zM0 10h30v5.500H0zM0 20h30v5.500H0z" fill={C} /></I>
          <div className="absolute right-2 bottom-0.5"><Down w={6} /></div>
        </button>
      </div>
      <ul className="mt-2 mr-1 ml-1 min-h-0 flex-1 border border-[#272727] bg-[#1d1d1d]">
        <Layer name="Vrstva malb…" selected />
        <Layer name="Pozadí" />
      </ul>
      <div className="flex h-20 shrink-0 items-center pr-[17px] pl-[18px]">
        <button aria-label="Přidat vrstvu" className="flex items-center gap-[18px]"><I w={46} h={46}><path d="M23 0v46M0 23h46" stroke={C} strokeWidth="5" /></I><Down /></button>
        <button aria-label="Duplikovat" className="ml-[21px]"><I w={50} h={50}><path d="M12.500 2.500h35v36h-35zM2.500 12v35.500H40" stroke={C} strokeWidth="4.500" /></I></button>
        <button aria-label="Níž" className="ml-7"><I w={52} h={30}><path d="M2 3l24 22L50 3" stroke={C} strokeWidth="5" /></I></button>
        <button aria-label="Výš" className="ml-7"><I w={52} h={30}><path d="M2 27L26 5l24 22" stroke="#bdbdbd" strokeWidth="5" /></I></button>
        <button aria-label="Vlastnosti" className="ml-7 flex items-center gap-[18px]">
          <I w={50} h={42}><path d="M0 6h50M0 21h50M0 36h50" stroke={C} strokeWidth="5" /><path d="M37 6v0M12 21v0M27 36v0" stroke={C} strokeWidth="11" strokeLinecap="round" /></I><Down />
        </button>
        <button aria-label="Odstranit" className="ml-auto"><I w={46} h={50}><path d="M0 8h46v5H0zM5 18h36v28q0 4-4 4H9q-4 0-4-4z" fill={C} /><path d="M13 9c0-9 20-9 20 0" stroke={C} strokeWidth="4" /></I></button>
      </div>
    </aside>
  );
}

function StatusBar() {
  return (
    <footer className="flex h-[85px] shrink-0 items-center pt-0.5 pl-[17px]">
      <button aria-label="Režim výběru"><I w={38} h={38}><path d="M1.500 1.500h35v35h-35z" stroke={C} strokeWidth="2.600" /><circle cx="19" cy="19" r="10.500" stroke={C} strokeWidth="2.600" strokeDasharray="2.700 2.800" /></I></button>
      <span className="ml-[37px] w-[232px]">d) In…liner</span>
      <span className="flex-1">RGB/alf…trc.icc</span>
      <button className="relative h-[60px] border-2 border-[#2a2a2a] px-[7px] whitespace-nowrap">
        <span className="absolute top-[5px] left-1 h-12 w-[79px] rounded-md bg-[#43525f]" />
        <span className="relative">11 811 <span className="underline decoration-[3px] underline-offset-[5px]">x</span> 7 008 (659,9 MiB)</span>
      </button>
      <button aria-label="Otočení" className="ml-[18px]">
        <I w={60} h={60}><circle cx="30" cy="30" r="28" fill="#1a1a1a" stroke="#4a4a4a" strokeWidth="3" /><path d="M30 3v54M3 30h54" stroke="#666" strokeWidth="2" strokeDasharray="12 3" /><path d="M29 30h29" stroke="#f0f0f0" strokeWidth="3" /><circle cx="30" cy="30" r="3.500" fill="#f0f0f0" /><circle cx="57" cy="30" r="3" fill="#f0f0f0" /></I>
      </button>
      <span className="ml-5 w-[430px]">0,00°</span>
      <span className="w-[150px]">14,7%</span>
      <input type="range" aria-label="Přiblížení" min="0" max="100" defaultValue="18" className="h-6 w-[206px] appearance-none bg-transparent [&::-webkit-slider-runnable-track]:h-2 [&::-webkit-slider-runnable-track]:rounded-full [&::-webkit-slider-runnable-track]:border-2 [&::-webkit-slider-runnable-track]:border-[#262626] [&::-webkit-slider-runnable-track]:bg-[linear-gradient(to_right,#6f8fac_18%,#262626_18%)] [&::-webkit-slider-thumb]:-mt-2.5 [&::-webkit-slider-thumb]:h-6 [&::-webkit-slider-thumb]:w-5 [&::-webkit-slider-thumb]:appearance-none [&::-webkit-slider-thumb]:rounded-md [&::-webkit-slider-thumb]:border-[3px] [&::-webkit-slider-thumb]:border-[#555] [&::-webkit-slider-thumb]:bg-[#444]" />
      <button aria-label="Přizpůsobit" className="mr-[13px] ml-[11px]"><I w={29} h={26}><path d="M1.500 1.500h26v18h-26zM14.500 20v4M4 24.500h21" stroke={C} strokeWidth="2.200" /><path d="M13 9h3v4h-3z" fill={C} /></I></button>
    </footer>
  );
}

export default function App() {
  return (
    <div className="flex h-screen flex-col overflow-hidden bg-[#323232] font-[Roboto,sans-serif] text-[40px] leading-[46px] text-[#ececec]">
      <MenuBar />
      <Toolbar />
      <div className="flex min-h-0 flex-1">
        <ColorDock />
        <Splitter className="w-[13px] items-end pt-2" />
        <Editor />
        <Splitter className="w-[11px] items-end pt-2" />
        <LayersDock />
      </div>
      <StatusBar />
    </div>
  );
}
